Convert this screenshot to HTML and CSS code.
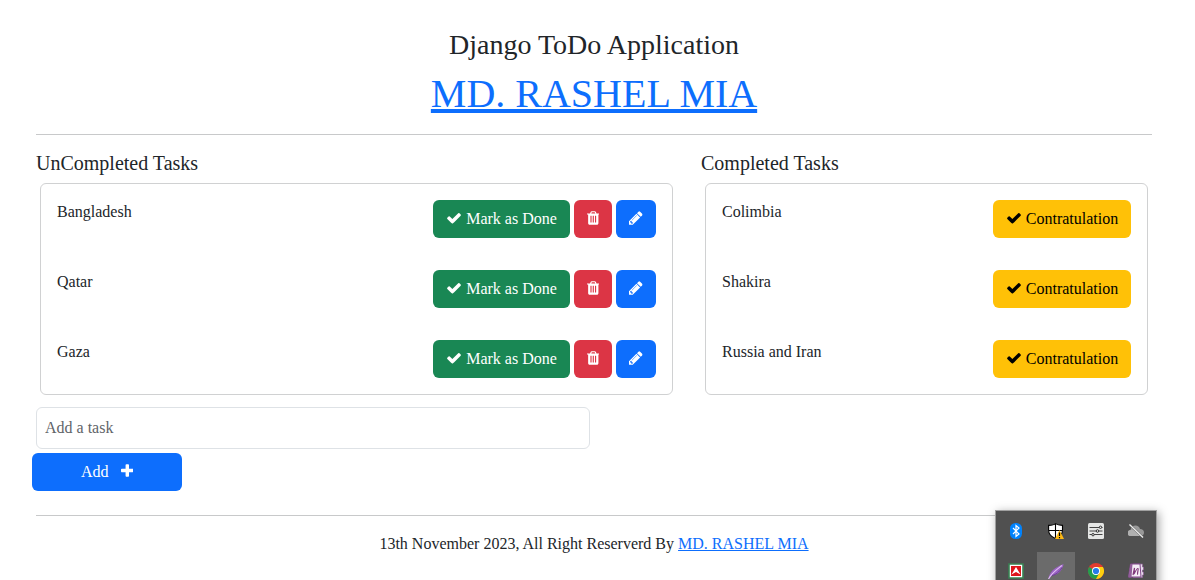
FILE: index.html
```html
<!DOCTYPE html>
<html lang="en">
<head>
<meta charset="utf-8">
<title>Django ToDo Application</title>
<link rel="stylesheet" href="styles.css">
</head>
<body>
<svg class="sprite" aria-hidden="true">
  <symbol id="check" viewBox="0 0 1792 1792"><path d="M1671 566q0 40-28 68l-724 724-136 136q-28 28-68 28t-68-28l-136-136-362-362q-28-28-28-68t28-68l136-136q28-28 68-28t68 28l294 295 656-657q28-28 68-28t68 28l136 136q28 28 28 68z"/></symbol>
  <symbol id="trash" viewBox="192 0 1408 1792"><path d="M704 1376v-704q0-14-9-23t-23-9h-64q-14 0-23 9t-9 23v704q0 14 9 23t23 9h64q14 0 23-9t9-23zm256 0v-704q0-14-9-23t-23-9h-64q-14 0-23 9t-9 23v704q0 14 9 23t23 9h64q14 0 23-9t9-23zm256 0v-704q0-14-9-23t-23-9h-64q-14 0-23 9t-9 23v704q0 14 9 23t23 9h64q14 0 23-9t9-23zm-544-992h448l-48-117q-7-9-17-11h-317q-10 2-17 11zm928 32v64q0 14-9 23t-23 9h-96v948q0 83-47 143.500t-113 60.500h-832q-66 0-113-58.500t-47-141.500v-952h-96q-14 0-23-9t-9-23v-64q0-14 9-23t23-9h309l70-167q15-37 54-63t79-26h320q40 0 79 26t54 63l70 167h309q14 0 23 9t9 23z"/></symbol>
  <symbol id="pencil" viewBox="128 0 1536 1792"><path d="M491 1536l91-91-235-235-91 91v107h128v128h107zm523-928q0-22-22-22-10 0-17 7l-542 542q-7 7-7 17 0 22 22 22 10 0 17-7l542-542q7-7 7-17zm-54-192l416 416-832 832h-416v-416zm683 96q0 53-37 90l-166 166-416-416 166-165q36-38 90-38 53 0 91 38l235 234q37 39 37 91z"/></symbol>
  <symbol id="plus" viewBox="192 0 1408 1792"><path d="M1600 736v192q0 40-28 68t-68 28h-416v416q0 40-28 68t-68 28h-192q-40 0-68-28t-28-68v-416h-416q-40 0-68-28t-28-68v-192q0-40 28-68t68-28h416v-416q0-40 28-68t68-28h192q40 0 68 28t28 68v416h416q40 0 68 28t28 68z"/></symbol>
</svg>

<header class="header">
  <h3 class="title">Django ToDo Application</h3>
  <h1 class="author"><a href="#">MD. RASHEL MIA</a></h1>
</header>
<hr class="rule">

<main class="columns">
  <section class="column-open">
    <h5 class="heading">UnCompleted Tasks</h5>
    <ul class="card">
      <li class="task"><span>Bangladesh</span><div class="actions">
        <button class="btn btn-done"><svg class="icon"><use href="#check"/></svg>Mark as Done</button>
        <button class="btn btn-delete" aria-label="Delete"><svg class="icon icon-trash"><use href="#trash"/></svg></button>
        <button class="btn btn-edit" aria-label="Edit"><svg class="icon icon-pencil"><use href="#pencil"/></svg></button></div></li>
      <li class="task"><span>Qatar</span><div class="actions">
        <button class="btn btn-done"><svg class="icon"><use href="#check"/></svg>Mark as Done</button>
        <button class="btn btn-delete" aria-label="Delete"><svg class="icon icon-trash"><use href="#trash"/></svg></button>
        <button class="btn btn-edit" aria-label="Edit"><svg class="icon icon-pencil"><use href="#pencil"/></svg></button></div></li>
      <li class="task"><span>Gaza</span><div class="actions">
        <button class="btn btn-done"><svg class="icon"><use href="#check"/></svg>Mark as Done</button>
        <button class="btn btn-delete" aria-label="Delete"><svg class="icon icon-trash"><use href="#trash"/></svg></button>
        <button class="btn btn-edit" aria-label="Edit"><svg class="icon icon-pencil"><use href="#pencil"/></svg></button></div></li>
    </ul>
    <form class="add-form">
      <input class="field" type="text" placeholder="Add a task">
      <button class="btn btn-add" type="button">Add<svg class="icon icon-plus"><use href="#plus"/></svg></button>
    </form>
  </section>
  <section class="column-done">
    <h5 class="heading">Completed Tasks</h5>
    <ul class="card">
      <li class="task"><span>Colimbia</span><button class="btn btn-congrats"><svg class="icon"><use href="#check"/></svg>Contratulation</button></li>
      <li class="task"><span>Shakira</span><button class="btn btn-congrats"><svg class="icon"><use href="#check"/></svg>Contratulation</button></li>
      <li class="task"><span>Russia and Iran</span><button class="btn btn-congrats"><svg class="icon"><use href="#check"/></svg>Contratulation</button></li>
    </ul>
  </section>
</main>

<hr class="rule">
<footer class="footer">13th November 2023, All Right Reserverd By <a href="#">MD. RASHEL MIA</a></footer>

<aside class="tray">
  <div class="tray-cell"><svg class="tray-icon" viewBox="0 0 16 16"><rect x="2" width="12" height="16" rx="5.500" fill="#0082fc"/><path d="M5 5l6 6-3 2.500v-11L11 5l-6 6" fill="none" stroke="#fff" stroke-width="1.200"/></svg></div>
  <div class="tray-cell"><svg class="tray-icon" viewBox="0 0 16 16"><path d="M7.500.6C6 2 3 2.300.6 2.400V7c0 4 2.600 6.800 6.900 8.500 4.400-1.700 7-4.500 7-8.500V2.400C12 2.300 9.500 2 7.500.6z" fill="#fff" stroke="#000" stroke-width="1.100"/><path d="M7.500 1v14M1 7.500h13.500" stroke="#000" stroke-width="1.100"/><path d="M11.500 7l4.500 9H7z" fill="#fdb813"/><path d="M11.500 9.500v3.500M11.500 14v1.200" stroke="#000" stroke-width="1.200"/></svg></div>
  <div class="tray-cell"><svg class="tray-icon" viewBox="0 0 16 16"><rect width="16" height="16" rx="1.500" fill="#e5e6e5"/><path d="M1.500 4.500h13M1.500 8h13M1.500 11.500h13" stroke="#444" stroke-width="1"/><g fill="#e5e6e5" stroke="#333"><circle cx="12.500" cy="4.300" r="1.200"/><circle cx="9.500" cy="8" r="1.300"/><circle cx="5" cy="11.700" r="1.200"/></g></svg></div>
  <div class="tray-cell"><svg class="tray-icon" viewBox="0 0 16 16"><path d="M3 13a3 3 0 0 1-.5-6C3 4 5 2.500 7.500 2.500c2.300 0 4 1.300 4.500 3.500 2.500 0 4 1.500 4 3.500S14.500 13 13 13z" fill="#999"/><path d="M2.500 7C5 6 8 8 13 13H3a3 3 0 0 1-.5-6z" fill="#b0b0b0"/><path d="M1.500 1.500l13.500 13" stroke="#606060" stroke-width="2"/><path d="M1.500 1.500l13.500 13" stroke="#eee" stroke-width="1.200"/></svg></div>
  <div class="tray-cell"><svg class="tray-icon" viewBox="0 0 16 16"><path d="M1 1h14v14H1z" fill="#fff" stroke="#398253" stroke-width="1.600"/><path d="M3 3h10v10H3z" fill="#dc161c"/><path d="M8 4l4.500 7.500L8 9l-4.500 2.500z" fill="#fff"/></svg></div>
  <div class="tray-cell tray-cell-active"><svg class="tray-icon" viewBox="0 0 16 16"><path d="M.5 16C1 9 7 4 15.500 1 15 6 11 12 4 12.500z" fill="#9b65c3"/><path d="M.5 16C4 9.500 8 7 14 2.500" fill="none" stroke="#e0bdf3" stroke-width="1.200"/><path d="M4 12.500c4-1 7-3 10-8" fill="none" stroke="#6b3c94"/></svg></div>
  <div class="tray-cell"><svg class="tray-icon" viewBox="0 0 16 16"><circle cx="8" cy="8" r="8" fill="#e33b2e"/><path d="M1.070 4A8 8 0 0 0 8 16l3.460-6z" fill="#229e4d"/><path d="M8 16a8 8 0 0 0 6.930-12H8l3.460 6z" fill="#fdd00f"/><circle cx="8" cy="8" r="4" fill="#fff"/><circle cx="8" cy="8" r="3.100" fill="#277bea"/></svg></div>
  <div class="tray-cell"><svg class="tray-icon" viewBox="0 0 16 16"><path d="M5 1h9.500v3h1v3h-1v2h1v3h-1v2.500H5z" fill="#e9dded" stroke="#8b5f93" stroke-width=".7"/><path d="M2.500 1H12l1 13H.5z" fill="#f5edf6" stroke="#80478a"/><path d="M2.500 1h2L3.500 14.500H.5z" fill="#925e9a"/><path d="M5 12l1.500-7L6 11c1.500-3 3-6 4-5.500S8.500 11 10 11.500" fill="none" stroke="#80397b" stroke-width="1.200"/></svg></div>
</aside>
</body>
</html>
```
FILE: styles.css
```css
* { box-sizing: border-box; }

body {
  height: 580px;
  margin: 0;
  padding: 28px 43px 0 36px;
  overflow: hidden;
  background: #fff;
  color: #212529;
  font: 16px/24px "Liberation Serif", "Times New Roman", serif;
}

a { color: #0d6efd; }

.sprite { display: none; }

.header { text-align: center; }

.title,
.author,
.heading {
  margin: 0;
  font-weight: 400;
  line-height: 1.2;
}

.title {
  margin-bottom: 8px;
  font-size: 28px;
}

.author { font-size: 40px; }

.author a {
  text-decoration-thickness: 4px;
  text-decoration-skip-ink: none;
}

.rule {
  height: 1px;
  margin: 16px 0;
  border: 0;
  background: #c8c9ca;
}

.columns {
  display: flex;
  gap: 24px;
  height: 348px;
}

.column-open { width: 641px; }

.column-done { width: 451px; }

.heading {
  margin: 0 0 8px;
  font-size: 20px;
}

.card {
  margin: 0 4px;
  padding: 0;
  border: 1px solid #d0d1d2;
  border-radius: 6px;
  list-style: none;
}

.task {
  display: flex;
  justify-content: space-between;
  height: 70px;
  padding: 16px;
}

.actions {
  display: flex;
  gap: 4px;
}

.btn {
  display: inline-flex;
  align-items: center;
  justify-content: center;
  gap: 4px;
  height: 38px;
  padding: 0;
  border: 0;
  border-radius: 6px;
  color: #fff;
  font: inherit;
  white-space: nowrap;
}

.btn-done {
  width: 137px;
  background: #198754;
}

.btn-delete {
  width: 38px;
  background: #dc3545;
}

.btn-edit {
  width: 40px;
  background: #0d6efd;
}

.btn-congrats {
  width: 138px;
  background: #ffc107;
  color: #000;
}

.icon {
  width: 16px;
  height: 16px;
  margin-bottom: 1px;
  fill: currentColor;
}

.icon-trash,
.icon-plus { width: 12.570px; }

.icon-pencil { width: 13.710px; }

.add-form {
  display: flex;
  flex-direction: column;
  gap: 4px;
  margin-top: 12px;
}

.field {
  width: 554px;
  height: 42px;
  padding: 0 8px;
  border: 1px solid #dee2e6;
  border-radius: 6px;
  font: inherit;
}

.field::placeholder { color: #5f6469; }

.btn-add {
  gap: 12px;
  width: 150px;
  margin-left: -4px;
  background: #0d6efd;
}

.footer { text-align: center; }

/* Notification tray floating over the page corner */
.tray {
  position: absolute;
  top: 510px;
  left: 995px;
  display: grid;
  grid-template-columns: repeat(4, 40px);
  grid-auto-rows: 40px;
  width: 162px;
  height: 90px;
  border: 1px solid #a0a0a0;
  background: #505050;
  box-shadow: 2px 2px 9px rgba(0, 0, 0, 0.35);
}

.tray-cell {
  display: grid;
  place-items: center;
  height: 40px;
}

.tray-cell-active {
  width: 38px;
  height: 38px;
  margin: 1px;
  background: #6b6b6b;
}

.tray-icon {
  width: 16px;
  height: 16px;
}
```
